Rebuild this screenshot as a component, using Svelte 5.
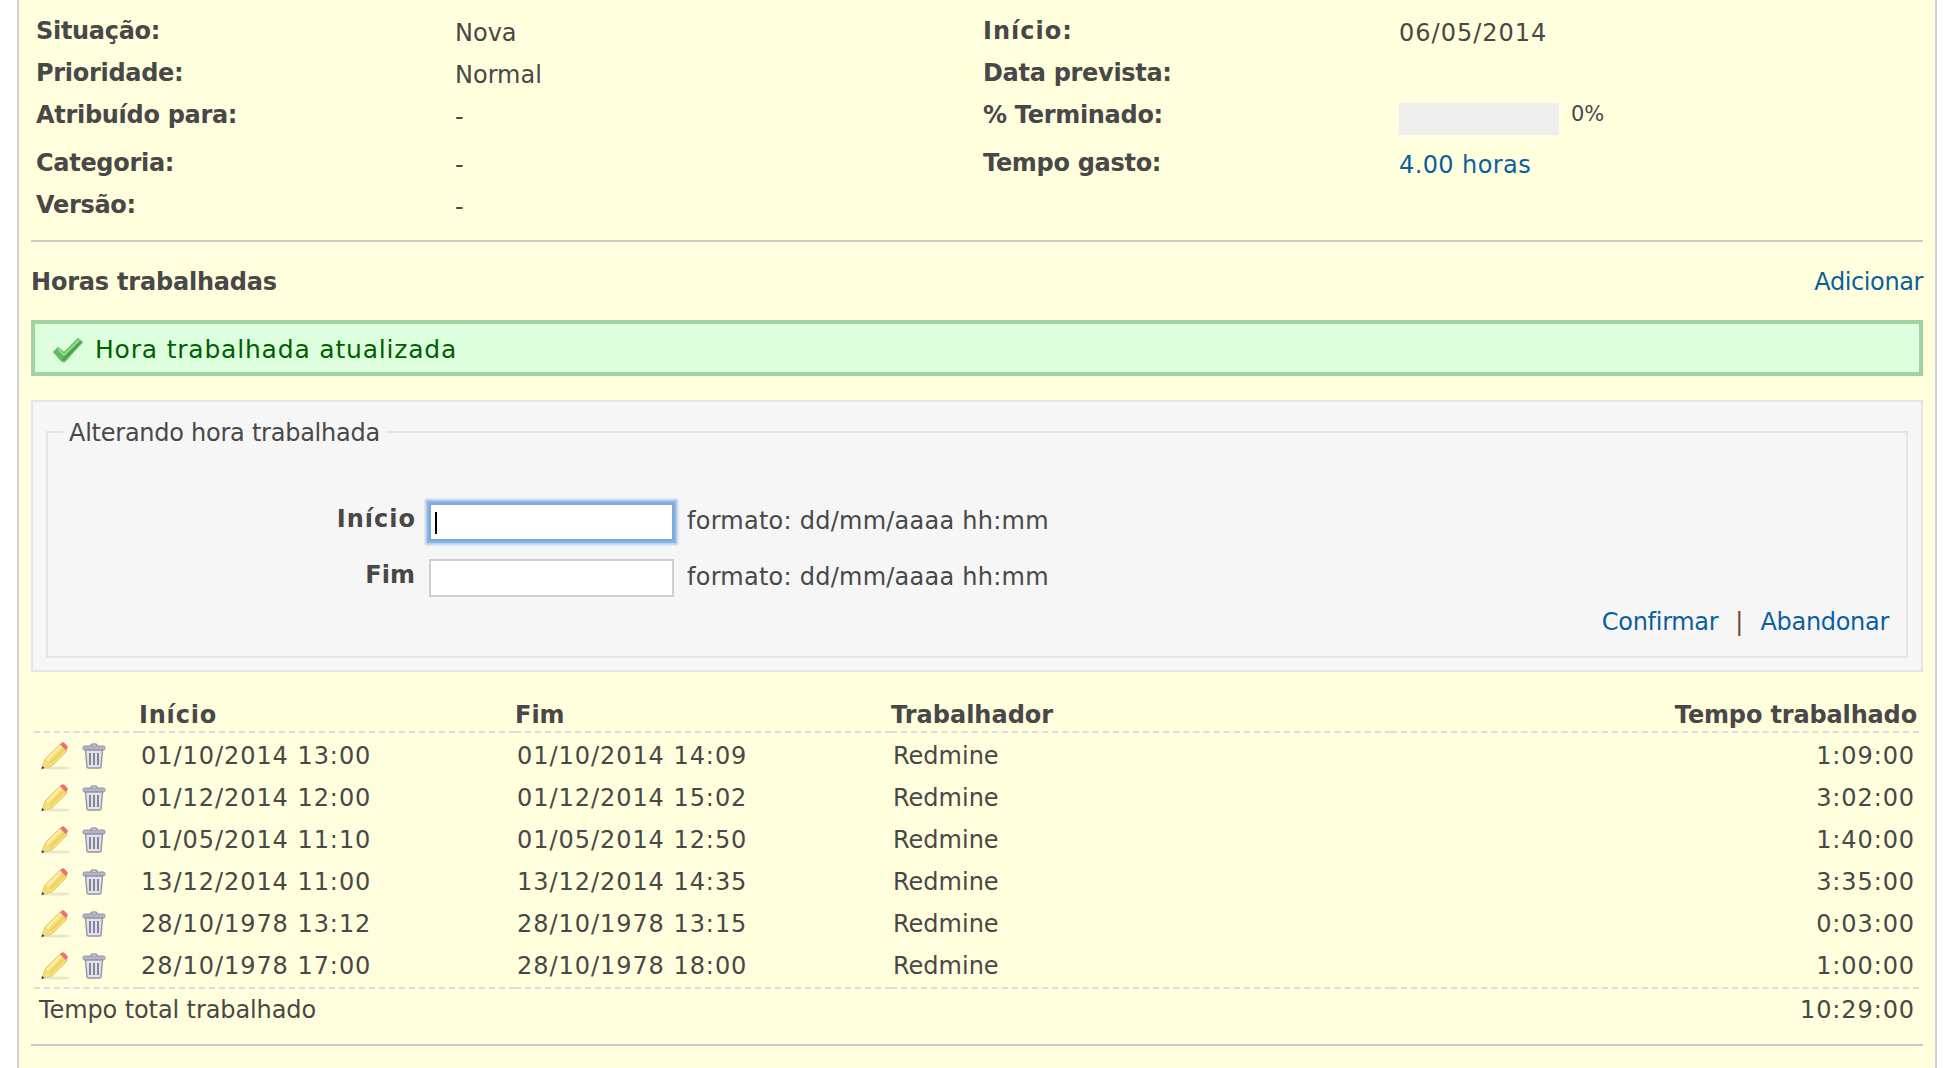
<script lang="ts">
  /** Time tracking block of an issue page */
  const attributes = [
    { label: 'Situação:', value: 'Nova', label2: 'Início:', value2: '06/05/2014' },
    { label: 'Prioridade:', value: 'Normal', label2: 'Data prevista:', value2: '' },
    { label: 'Atribuído para:', value: '-', label2: '% Terminado:', progress: 0 },
    { label: 'Categoria:', value: '-', label2: 'Tempo gasto:', link: '4.00 horas' },
    { label: 'Versão:', value: '-' },
  ];

  const entries = [
    ['01/10/2014 13:00', '01/10/2014 14:09', 'Redmine', '1:09:00'],
    ['01/12/2014 12:00', '01/12/2014 15:02', 'Redmine', '3:02:00'],
    ['01/05/2014 11:10', '01/05/2014 12:50', 'Redmine', '1:40:00'],
    ['13/12/2014 11:00', '13/12/2014 14:35', 'Redmine', '3:35:00'],
    ['28/10/1978 13:12', '28/10/1978 13:15', 'Redmine', '0:03:00'],
    ['28/10/1978 17:00', '28/10/1978 18:00', 'Redmine', '1:00:00'],
  ];
</script>

<main class="issue">
  <div class="attributes">
    {#each attributes as row}
      <div class="attr-row" class:attr-row--tall={row.progress !== undefined}>
        <span class="attr-label">{row.label}</span>
        <span class="attr-value">{row.value}</span>
        <span class="attr-label" class:attr-label--wide={row.label2 === 'Início:'}>{row.label2 ?? ''}</span>
        <span class="attr-value">
          {#if row.progress !== undefined}
            <span class="progress"></span><span class="progress-text">{row.progress}%</span>
          {:else if row.link}
            <a class="spent" href="#top">{row.link}</a>
          {:else}
            <span class="numeric">{row.value2 ?? ''}</span>
          {/if}
        </span>
      </div>
    {/each}
  </div>

  <hr />

  <div class="section-head">
    <h3>Horas trabalhadas</h3>
    <a class="add" href="#top">Adicionar</a>
  </div>

  <div class="flash">
    <svg class="check" viewBox="0 0 32 26" width="32" height="26" aria-hidden="true">
      <path d="M1 15 L6 10 L12 15 L26 1 L31 5 L13 25 L10 25 Z" fill="#5fbb5f" stroke="#8fd68f" stroke-width="1" />
      <path d="M6 12 L12 18 L27 3" fill="none" stroke="#a5e0a5" stroke-width="1.5" />
      <path d="M11 23 L29 5" fill="none" stroke="#48a048" stroke-width="2" />
    </svg>
    <span>Hora trabalhada atualizada</span>
  </div>

  <div class="box">
    <fieldset>
      <legend>Alterando hora trabalhada</legend>
      <div class="field">
        <span class="field-label field-label--wide">Início</span>
        <span class="input-wrap">
          <input class="input input--focus" type="text" readonly />
          <span class="caret"></span>
        </span>
        <span class="hint">formato: dd/mm/aaaa hh:mm</span>
      </div>
      <div class="field">
        <span class="field-label">Fim</span>
        <span class="input-wrap"><input class="input" type="text" readonly /></span>
        <span class="hint">formato: dd/mm/aaaa hh:mm</span>
      </div>
      <div class="actions">
        <a href="#top">Confirmar</a><span class="sep">|</span><a href="#top">Abandonar</a>
      </div>
    </fieldset>
  </div>

  <table>
    <thead>
      <tr>
        <th class="col-icons"></th>
        <th class="col-date col-start">Início</th>
        <th class="col-date">Fim</th>
        <th class="col-user">Trabalhador</th>
        <th class="col-time">Tempo trabalhado</th>
      </tr>
    </thead>
    <tbody>
      {#each entries as entry}
        <tr>
          <td class="icons">
            <svg class="pencil" viewBox="0 0 32 28" width="32" height="28" aria-hidden="true">
              <ellipse cx="17" cy="26" rx="13" ry="1.6" fill="#e8e8cc" />
              <path d="M1.5 27 L5 17 L20 2 L27 9 L12 24 Z" fill="#f7de70" stroke="#e2c873" stroke-width="1" />
              <path d="M7 18 L21 4" stroke="#fcf0a8" stroke-width="2.5" />
              <path d="M10 21 L24 7" stroke="#f0cf66" stroke-width="2" />
              <path d="M20 2 L22 0.5 Q23 0 24 0.5 L27.5 4 Q28 5 27.5 6 L26 8.5 Z" fill="#ee6f76" />
              <path d="M1.5 27 L3 21.5 L7 25.5 Z" fill="#e8d8a8" />
              <path d="M1.5 27 L2.3 24 L4.5 26 Z" fill="#333" />
            </svg>
            <svg class="trash" viewBox="0 0 24 26" width="24" height="26" aria-hidden="true">
              <path d="M9 3 Q9 1 11 1 L13 1 Q15 1 15 3" fill="none" stroke="#9a9aae" stroke-width="1.6" />
              <rect x="1" y="3" width="22" height="4" rx="1.5" fill="#b4b4c6" stroke="#9494a8" />
              <path d="M3.5 7 L5 24 Q5 25 6.5 25 L17.5 25 Q19 25 19 24 L20.5 7 Z" fill="#e2e2ea" stroke="#9494a8" stroke-width="1.4" />
              <path d="M8 10 V22 M12 10 V22 M16 10 V22" stroke="#85859a" stroke-width="2" />
            </svg>
          </td>
          <td class="date">{entry[0]}</td>
          <td class="date">{entry[1]}</td>
          <td class="user">{entry[2]}</td>
          <td class="time">{entry[3]}</td>
        </tr>
      {/each}
    </tbody>
    <tfoot>
      <tr>
        <td colspan="4" class="total-label">Tempo total trabalhado</td>
        <td class="time">10:29:00</td>
      </tr>
    </tfoot>
  </table>

  <hr />
</main>

<style>
  :global(body) {
    margin: 0;
    background: #fff;
  }

  .issue {
    box-sizing: border-box;
    width: 1920px;
    height: 1068px;
    margin-left: 17px;
    padding: 12px 12px 0 12px;
    overflow: hidden;
    background: #ffd;
    border-left: 2px solid #d0d0d0;
    border-right: 2px solid #d0d0d0;
    color: #484848;
    font-family: "DejaVu Sans", Verdana, sans-serif;
    font-size: 24px;
  }

  a {
    color: #0b5f9e;
    text-decoration: none;
  }

  hr {
    height: 2px;
    margin: 0;
    border: none;
    background: #cccccc;
  }

  /* Attributes */
  .attributes {
    padding-left: 5px;
    height: 229px;
    margin-bottom: -1px;
  }

  .attr-row {
    display: grid;
    grid-template-columns: 419px 528px 416px 1fr;
    height: 42px;
    line-height: 42px;
  }

  .attr-row--tall {
    height: 48px;
  }

  .attr-label {
    font-weight: bold;
    line-height: 38px;
    letter-spacing: -0.3px;
  }

  .attr-label--wide {
    letter-spacing: 1px;
  }

  .numeric {
    letter-spacing: 1px;
  }

  .spent {
    letter-spacing: 0.4px;
  }

  .progress {
    display: inline-block;
    width: 160px;
    height: 32px;
    margin-top: 7px;
    background: #eee;
    vertical-align: top;
  }

  .progress-text {
    display: inline-block;
    margin-left: 12px;
    font-size: 21px;
    line-height: 36px;
    vertical-align: top;
  }

  /* Section head */
  .section-head {
    display: flex;
    justify-content: space-between;
    align-items: center;
    box-sizing: border-box;
    height: 78px;
    padding-top: 2px;
  }

  h3 {
    margin: 0;
    font-size: 24px;
    font-weight: bold;
    letter-spacing: -0.2px;
  }

  .add {
    letter-spacing: -0.4px;
  }

  .flash {
    display: flex;
    align-items: center;
    gap: 11px;
    box-sizing: border-box;
    height: 56px;
    padding-left: 17px;
    background: #dfd;
    border: 4px solid #a0d3a0;
    color: #005f00;
    font-size: 25px;
    letter-spacing: 0.8px;
    white-space: nowrap;
  }

  .flash span {
    margin-top: 2px;
  }

  .check {
    margin-top: 4px;
  }

  /* Edit form */
  .box {
    box-sizing: border-box;
    height: 272px;
    margin-top: 24px;
    padding: 15px 13px 0;
    background: #f6f6f6;
    border: 2px solid #e4e4e4;
  }

  fieldset {
    box-sizing: border-box;
    height: 241px;
    margin: 0;
    padding: 47px 17px 0 0;
    border: 2px solid #e4e4e4;
    position: relative;
  }

  legend {
    margin-left: 15px;
    padding: 2px 6px 0 6px;
    line-height: 28px;
    font-size: 24px;
    letter-spacing: -0.25px;
  }

  .field {
    display: flex;
    align-items: center;
    height: 56px;
  }

  .field-label {
    box-sizing: border-box;
    width: 368px;
    padding-right: 1px;
    font-weight: bold;
    text-align: right;
    line-height: 30px;
    margin-bottom: 6px;
  }

  .field-label--wide {
    padding-right: 0;
    letter-spacing: 1px;
  }

  .input-wrap {
    position: relative;
    display: block;
    margin-left: 13px;
    height: 38px;
  }

  .input {
    display: block;
    box-sizing: border-box;
    width: 245px;
    height: 38px;
    padding: 0;
    background: #fff;
    border: 2px solid #cfcfcf;
    outline: none;
  }

  .input--focus {
    border: 2px solid #7dabd9;
    box-shadow: 0 0 0 2px #8bb5e0, 0 0 2px 4px #b4cfeb;
  }

  .caret {
    position: absolute;
    left: 6px;
    top: 9px;
    width: 2px;
    height: 22px;
    background: #000;
  }

  .hint {
    margin-left: 13px;
    margin-bottom: 2px;
    letter-spacing: 0.25px;
  }

  .actions {
    margin-top: 1px;
    text-align: right;
    line-height: 30px;
    font-size: 24px;
  }

  .actions a {
    letter-spacing: -0.3px;
  }

  .sep {
    margin: 0 17px;
    color: #6b4a3a;
  }

  /* Entries */
  table {
    width: 1885px;
    margin: 19px 0 0 3px;
    border-collapse: collapse;
    table-layout: fixed;
  }

  th {
    height: 38px;
    padding: 0 0 2px;
    line-height: 28px;
    vertical-align: bottom;
    text-align: left;
    font-size: 24px;
    border-bottom: 2px dashed #dcdce4;
  }

  .col-icons {
    width: 105px;
  }

  .col-date {
    width: 376px;
  }

  .col-start {
    letter-spacing: 0.8px;
  }

  .col-user {
    width: 500px;
  }

  .col-time {
    padding-right: 2px;
    text-align: right;
    letter-spacing: -0.15px;
  }

  td {
    height: 42px;
    padding: 0;
  }

  tbody tr:first-child td {
    padding-top: 2px;
  }

  .icons {
    padding-left: 6px;
    white-space: nowrap;
  }

  .icons svg {
    vertical-align: middle;
    margin-top: -2px;
  }

  .trash {
    margin-left: 2px;
  }

  .date,
  .user {
    padding-left: 2px;
  }

  .date {
    letter-spacing: 0.95px;
  }

  .time {
    padding-right: 4px;
    text-align: right;
    letter-spacing: 0.9px;
  }

  tfoot td {
    border-top: 2px dashed #dcdce4;
  }

  .total-label {
    padding-left: 5px;
    letter-spacing: -0.1px;
  }

  table + hr {
    margin-top: 13px;
  }
</style>
